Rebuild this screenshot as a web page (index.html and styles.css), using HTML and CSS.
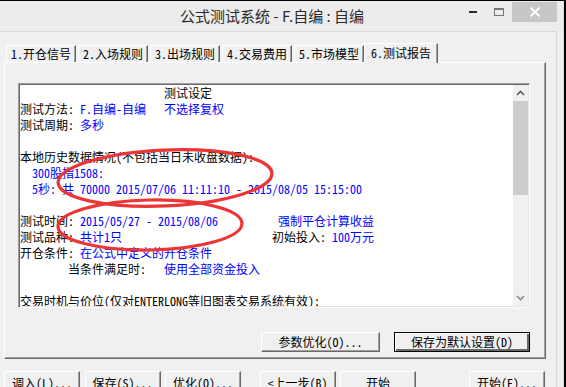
FILE: index.html
```html
<!DOCTYPE html>
<html>
<head>
    <meta charset="UTF-8">
    <title>公式测试系统 - F.自编 : 自编</title>
    <link rel="stylesheet" href="styles.css">
</head>
<body>
    <div class="window">
        <div class="titlebar">
            <div class="title">公式测试系统 - F.自编 : 自编</div>
            <div class="controls">
                <span class="ctl">
                    <svg width="10" height="10" viewBox="0 0 10 10"><rect x="1" y="4" width="8" height="2" fill="#2a2a2a"/></svg>
                </span>
                <span class="ctl">
                    <svg width="12" height="10" viewBox="0 0 12 10"><rect x="1.5" y="1.5" width="9" height="7" fill="none" stroke="#777" stroke-width="1"/><rect x="1" y="1" width="10" height="2" fill="#777"/></svg>
                </span>
                <span class="ctl close">
                    <svg width="12" height="10" viewBox="0 0 12 10"><path d="M1.5 0.5 L10.5 9.5 M10.5 0.5 L1.5 9.5" stroke="#fff" stroke-width="1.8"/></svg>
                </span>
            </div>
        </div>

        <div class="client">
            <div class="tabs">
                <div class="tab">1.开仓信号</div>
                <div class="tab">2.入场规则</div>
                <div class="tab">3.出场规则</div>
                <div class="tab">4.交易费用</div>
                <div class="tab">5.市场模型</div>
                <div class="tab active">6.测试报告</div>
            </div>

            <div class="panel">
                <div class="report">
<pre class="report-text">                        测试设定
测试方法: <span class="v">F.自编-自编   不选择复权</span>
测试周期: <span class="v">多秒</span>

本地历史数据情况(不包括当日未收盘数据):
<span class="v">  300股指1508:</span>
<span class="v">  5秒: 共 70000 2015/07/06 11:11:10 - 2015/08/05 15:15:00</span>

测试时间: <span class="v">2015/05/27 - 2015/08/06          强制平仓计算收益</span>
测试品种: <span class="v">共计1只</span>                         初始投入: <span class="v">100万元</span>
开仓条件: <span class="v">在公式中定义的开仓条件</span>
        当条件满足时:   <span class="v">使用全部资金投入</span>

交易时机与价位(仅对ENTERLONG等旧图表交易系统有效):</pre>
                    <div class="scrollbar">
                        <div class="arrow">
                            <svg width="9" height="6" viewBox="0 0 9 6"><path d="M1 5 L4.5 1.5 L8 5" fill="none" stroke="#5f5f5f" stroke-width="1.6"/></svg>
                        </div>
                        <div class="track"><div class="thumb"></div></div>
                        <div class="arrow">
                            <svg width="9" height="6" viewBox="0 0 9 6"><path d="M1 1 L4.5 4.5 L8 1" fill="none" stroke="#8a8a8a" stroke-width="1.6"/></svg>
                        </div>
                    </div>
                </div>

                <div class="panel-buttons">
                    <button class="btn optimize">参数优化(O)...</button>
                    <button class="btn save-default">保存为默认设置(D)</button>
                </div>
            </div>

            <div class="footer">
                <button class="btn step">调入(L)...</button>
                <button class="btn step">保存(S)...</button>
                <button class="btn step">优化(O)...</button>
                <button class="btn step back">&lt;上一步(B)</button>
                <button class="btn step">开始</button>
                <button class="btn step finish">开始(E)...</button>
            </div>
        </div>
    </div>

    <!-- hand-drawn red marks over the report -->
    <svg class="marks" width="566" height="387" viewBox="0 0 566 387">
        <ellipse cx="165" cy="178" rx="107" ry="28" transform="rotate(-2.5 165 178)" fill="none" stroke="#ee3535" stroke-width="3.2"/>
        <ellipse cx="150" cy="225" rx="92" ry="25" transform="rotate(-1 150 225)" fill="none" stroke="#ee3535" stroke-width="3.2"/>
    </svg>
</body>
</html>
```

FILE: styles.css
```css
body {
    margin: 0;
    width: 566px;
    height: 387px;
    overflow: hidden;
    position: relative;
    background: #000;
    font-family: "Noto Sans Mono CJK SC", "Noto Sans CJK SC", monospace;
    font-size: 12px;
    color: #000;
}
.window {
    margin-top: 1px;
    width: 564px;
    height: 386px;
    box-sizing: border-box;
    background: #f0f0f0;
    border-right: 1px solid #dcdcdc;
}
.titlebar {
    height: 30px;
    display: flex;
    align-items: flex-start;
    background: #ececec;
}
.title {
    margin-left: 180px;
    margin-top: 5px;
    font-family: "Noto Sans CJK SC", sans-serif;
    font-size: 15px;
    line-height: 20px;
    color: #2b2b2b;
}
.controls {
    display: flex;
    margin-left: auto;
    margin-right: 6px;
    margin-top: 1px;
}
.ctl {
    width: 26px;
    height: 20px;
    display: flex;
    align-items: center;
    justify-content: center;
}
.ctl.close {
    width: 45px;
    background: #c7c7c7;
}
.client {
    width: 557px;
    height: 356px;
    box-sizing: border-box;
    border-top: 1px solid #d9d9d9;
    border-right: 1px solid #d9d9d9;
}
.tabs {
    display: flex;
    align-items: flex-end;
    height: 19px;
    margin-top: 11px;
    padding-left: 6px;
    position: relative;
    z-index: 1;
}
.tab {
    height: 17px;
    box-sizing: border-box;
    padding: 0 4px;
    margin-right: 2px;
    border-top: 1px solid #fff;
    border-left: 1px solid #fff;
    border-right: 1px solid #696969;
    box-shadow: inset -1px 0 #a0a0a0;
    line-height: 16px;
    white-space: nowrap;
    background: #f0f0f0;
}
.tab.active {
    height: 20px;
    margin-left: -2px;
    margin-bottom: -1px;
    padding: 0 6px;
    line-height: 18px;
}
.panel {
    margin-left: 4px;
    width: 542px;
    box-sizing: border-box;
    padding: 20px 13px 6px 13px;
    border: 1px solid;
    border-color: #fff #696969 #696969 #fff;
    box-shadow: inset -1px -1px #a0a0a0;
}
.report {
    display: flex;
    width: 512px;
    height: 225px;
    box-sizing: border-box;
    border: 1px solid;
    border-color: #a0a0a0 #fff #fff #a0a0a0;
    box-shadow: inset 1px 1px #696969, inset -1px -1px #e3e3e3;
    padding: 1px;
}
.report-text {
    flex: 1;
    margin: 0;
    overflow: hidden;
    background: #fff;
    font: inherit;
    line-height: 16px;
    white-space: pre;
}
.v {
    color: #0000ff;
}
.scrollbar {
    width: 15px;
    display: flex;
    flex-direction: column;
    background: #f0f0f0;
}
.arrow {
    height: 16px;
    display: flex;
    align-items: center;
    justify-content: center;
}
.track {
    flex: 1;
}
.thumb {
    height: 94px;
    background: #cdcdcd;
}
.panel-buttons {
    display: flex;
    justify-content: flex-end;
    gap: 14px;
    width: 512px;
    margin-top: 24px;
}
.btn {
    height: 20px;
    padding: 0;
    box-sizing: border-box;
    font: inherit;
    line-height: 16px;
    color: #000;
    background: #f0f0f0;
    border: 1px solid;
    border-color: #fff #696969 #696969 #fff;
    box-shadow: inset -1px -1px #a0a0a0;
    white-space: nowrap;
}
.optimize {
    width: 119px;
}
.save-default {
    width: 136px;
    border-color: #000;
    box-shadow: inset 1px 1px #fff, inset -2px -2px #696969;
}
.footer {
    display: flex;
    gap: 4.5px;
    margin-top: 12px;
    padding-left: 4px;
    width: 545px;
    box-sizing: border-box;
}
.btn.step {
    width: 76px;
    height: 23px;
    line-height: 19px;
}
.btn.back {
    margin-left: 14px;
}
.btn.finish {
    margin-left: auto;
}
.marks {
    position: absolute;
    left: 0;
    top: 0;
    pointer-events: none;
}
```
